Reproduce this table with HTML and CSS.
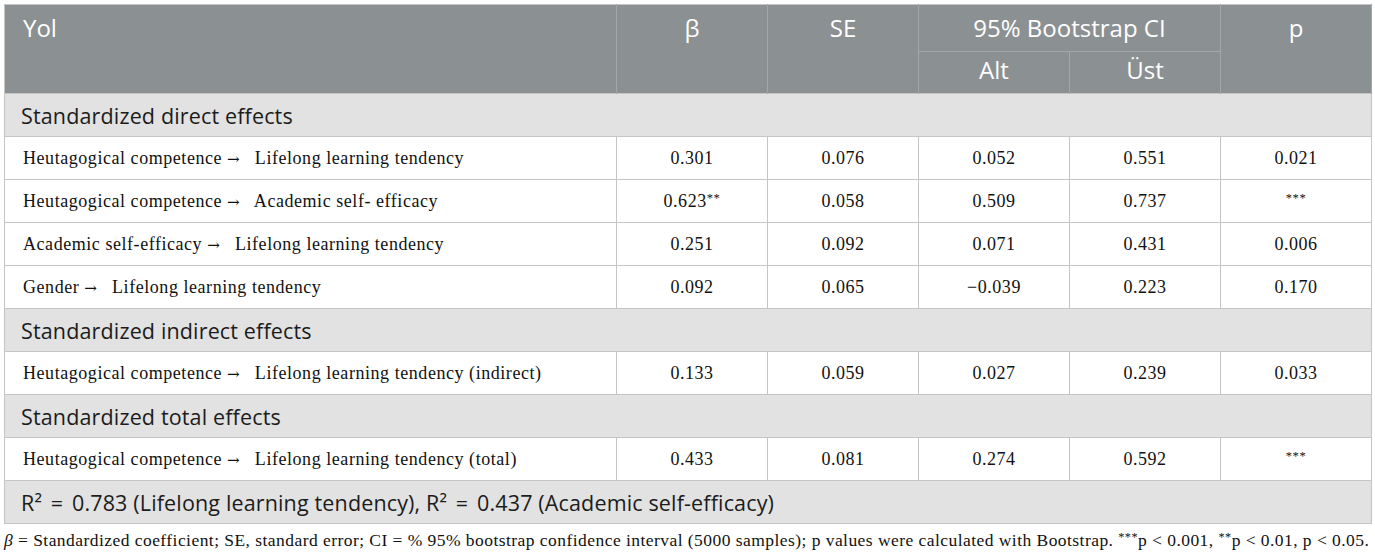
FILE: index.html
```html
<!DOCTYPE html>
<html>
<head>
<meta charset="utf-8">
<link rel="stylesheet" href="styles.css">
</head>
<body>
<div class="wrap">
<table class="stats">
  <colgroup>
    <col class="c-label">
    <col class="c-num"><col class="c-num"><col class="c-num"><col class="c-num"><col class="c-num">
  </colgroup>
  <thead>
    <tr class="h1">
      <th rowspan="2" class="th-label">Yol</th>
      <th rowspan="2">β</th>
      <th rowspan="2">SE</th>
      <th colspan="2" class="th-ci">95% Bootstrap CI</th>
      <th rowspan="2">p</th>
    </tr>
    <tr class="h2">
      <th>Alt</th>
      <th>Üst</th>
    </tr>
  </thead>
  <tbody>
    <tr class="sec"><td colspan="6">Standardized direct effects</td></tr>
    <tr class="row"><td class="lbl">Heutagogical competence <span class="arr">→</span>&nbsp;&nbsp; Lifelong learning tendency</td><td>0.301</td><td>0.076</td><td>0.052</td><td>0.551</td><td>0.021</td></tr>
    <tr class="row"><td class="lbl">Heutagogical competence <span class="arr">→</span>&nbsp;&nbsp; Academic self- efficacy</td><td>0.623<sup>**</sup></td><td>0.058</td><td>0.509</td><td>0.737</td><td><sup>***</sup></td></tr>
    <tr class="row"><td class="lbl">Academic self-efficacy <span class="arr">→</span>&nbsp;&nbsp; Lifelong learning tendency</td><td>0.251</td><td>0.092</td><td>0.071</td><td>0.431</td><td>0.006</td></tr>
    <tr class="row"><td class="lbl">Gender <span class="arr">→</span>&nbsp;&nbsp; Lifelong learning tendency</td><td>0.092</td><td>0.065</td><td>−0.039</td><td>0.223</td><td>0.170</td></tr>
    <tr class="sec"><td colspan="6">Standardized indirect effects</td></tr>
    <tr class="row"><td class="lbl">Heutagogical competence <span class="arr">→</span>&nbsp;&nbsp; Lifelong learning tendency (indirect)</td><td>0.133</td><td>0.059</td><td>0.027</td><td>0.239</td><td>0.033</td></tr>
    <tr class="sec"><td colspan="6">Standardized total effects</td></tr>
    <tr class="row"><td class="lbl">Heutagogical competence <span class="arr">→</span>&nbsp;&nbsp; Lifelong learning tendency (total)</td><td>0.433</td><td>0.081</td><td>0.274</td><td>0.592</td><td><sup>***</sup></td></tr>
    <tr class="sec"><td colspan="6">R² <span class="eq">=</span> 0.783 (Lifelong learning tendency), R² <span class="eq">=</span> 0.437 (Academic self-efficacy)</td></tr>
  </tbody>
</table>
<p class="note"><i>β</i> = Standardized coefficient; SE, standard error; CI = % 95% bootstrap confidence interval (5000 samples); p values were calculated with Bootstrap. <sup>***</sup>p &lt; 0.001, <sup>**</sup>p &lt; 0.01, p &lt; 0.05.</p>
</div>
</body>
</html>
```

FILE: styles.css
```css
html, body {
  margin: 0;
  padding: 0;
  background: #ffffff;
}

.wrap {
  padding: 4px 4px 0 4px;
}

.stats {
  width: 1367px;
  border-collapse: collapse;
  table-layout: fixed;
  border: 1px solid #c3c6c4;
}

.c-label { width: 612px; }
.c-num { width: 151px; }

.stats th {
  background: #8b9092;
  color: #ffffff;
  font-family: "Open Sans", Lato, sans-serif;
  font-weight: 400;
  font-size: 24px;
  line-height: 28px;
  text-align: center;
  vertical-align: top;
  padding: 9px 8px 0 8px;
  height: 37px;
  border-left: 1px solid #a3a7a8;
  border-right: 1px solid #a3a7a8;
}

.stats .th-label {
  text-align: left;
  padding-left: 18px;
  border-left: none;
}

.stats tr.h2 th {
  padding-top: 4px;
  height: 37px;
}

.stats th.th-ci {
  border-bottom: 1px solid #a3a7a8;
}

.stats td {
  border: 1px solid #c3c6c4;
  height: 42px;
  padding: 0;
  vertical-align: middle;
}

.stats tr.sec td {
  background: #e1e2e1;
  font-family: "Open Sans", Lato, sans-serif;
  font-size: 21.5px;
  letter-spacing: 0.15px;
  color: #1c1c1c;
  padding: 0 16px;
}

.eq {
  padding: 0 3px;
}

.stats tr.row td {
  font-family: "Liberation Serif", "Times New Roman", serif;
  font-size: 18px;
  letter-spacing: 0.55px;
  color: #111111;
  text-align: center;
  background: #ffffff;
}

.stats tr.row td.lbl {
  text-align: left;
  padding-left: 18px;
}

.arr {
  font-family: "DejaVu Serif", serif;
  font-size: 15px;
  letter-spacing: 0;
}

sup {
  font-size: 0.7em;
  vertical-align: 0.4em;
  line-height: 0;
}

.note {
  margin: 6px 0 0 0;
  font-family: "Liberation Serif", "Times New Roman", serif;
  font-size: 17.5px;
  letter-spacing: 0.45px;
  color: #111111;
  white-space: nowrap;
}
```
